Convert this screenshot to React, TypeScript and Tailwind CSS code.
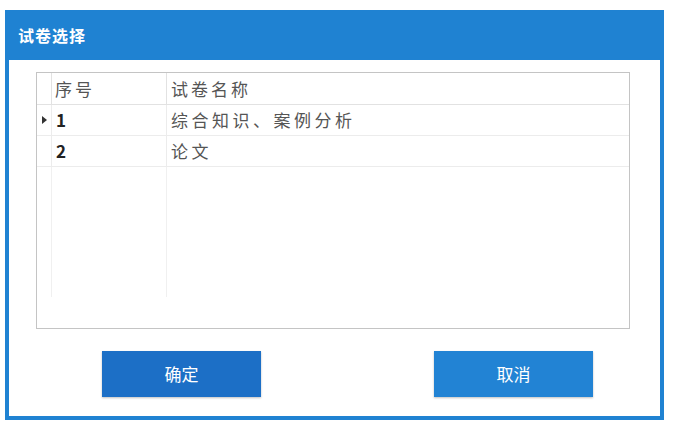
import React from 'react';

type Row = { no: string; name: string };

const ROWS: Row[] = [
  { no: '1', name: '综合知识、案例分析' },
  { no: '2', name: '论文' },
];

const font = { fontFamily: '"Noto Sans CJK SC", "Noto Sans", sans-serif' };

export default function App() {
  return (
    <div className="w-[673px] h-[428px] bg-white pt-[10px] pl-[5px]" style={font}>
      {/* 对话框 */}
      <div className="w-[659px] h-[410px] border-[4px] border-t-0 border-[#1f82d2] bg-white flex flex-col">
        <div className="h-[50px] -mx-[4px] bg-[#1f82d2] flex items-center pl-[13px]">
          <span className="text-white text-[16px] font-bold tracking-[1px]">试卷选择</span>
        </div>

        <div className="pt-[12px] pl-[27px]">
          {/* 表格 */}
          <div className="w-[594px] h-[257px] border border-[#c4c4c4] flex flex-col">
            <div className="flex h-[32px] border-b border-[#e2e2e2] text-[#555] text-[17px] tracking-[3px]">
              <div className="w-[15px] border-r border-[#e2e2e2]" />
              <div className="w-[115px] border-r border-[#e2e2e2] pl-[3px] flex items-center">序号</div>
              <div className="flex-1 pl-[4px] flex items-center">试卷名称</div>
            </div>
            {ROWS.map((r, i) => (
              <div key={r.no} className="flex h-[31px] border-b border-[#ececec]">
                <div className="w-[15px] border-r border-[#ececec] flex items-center justify-center">
                  {i === 0 && (
                    <svg width="5" height="8" viewBox="0 0 5 8">
                      <path d="M0 0 L5 4 L0 8 Z" fill="#333" />
                    </svg>
                  )}
                </div>
                <div className="w-[115px] border-r border-[#ececec] pl-[4px] flex items-center text-[#222] text-[17px] font-bold">
                  {r.no}
                </div>
                <div className="flex-1 pl-[4px] flex items-center text-[#555] text-[17px] tracking-[3.5px]">
                  {r.name}
                </div>
              </div>
            ))}
            {/* 空白区域的网格线 */}
            <div className="flex h-[130px]">
              <div className="w-[15px] border-r border-[#f0f0f0]" />
              <div className="w-[115px] border-r border-[#f0f0f0]" />
              <div className="flex-1" />
            </div>
          </div>
        </div>

        {/* 按钮 */}
        <div className="flex pt-[22px] pl-[93px] gap-[173px]">
          <button className="w-[159px] h-[46px] bg-[#1c6fc6] text-white text-[17px] shadow-[0_1px_2px_rgba(0,0,0,0.25)]">
            确定
          </button>
          <button className="w-[159px] h-[46px] bg-[#2283d4] text-white text-[17px] shadow-[0_1px_2px_rgba(0,0,0,0.25)]">
            取消
          </button>
        </div>
      </div>
    </div>
  );
}
